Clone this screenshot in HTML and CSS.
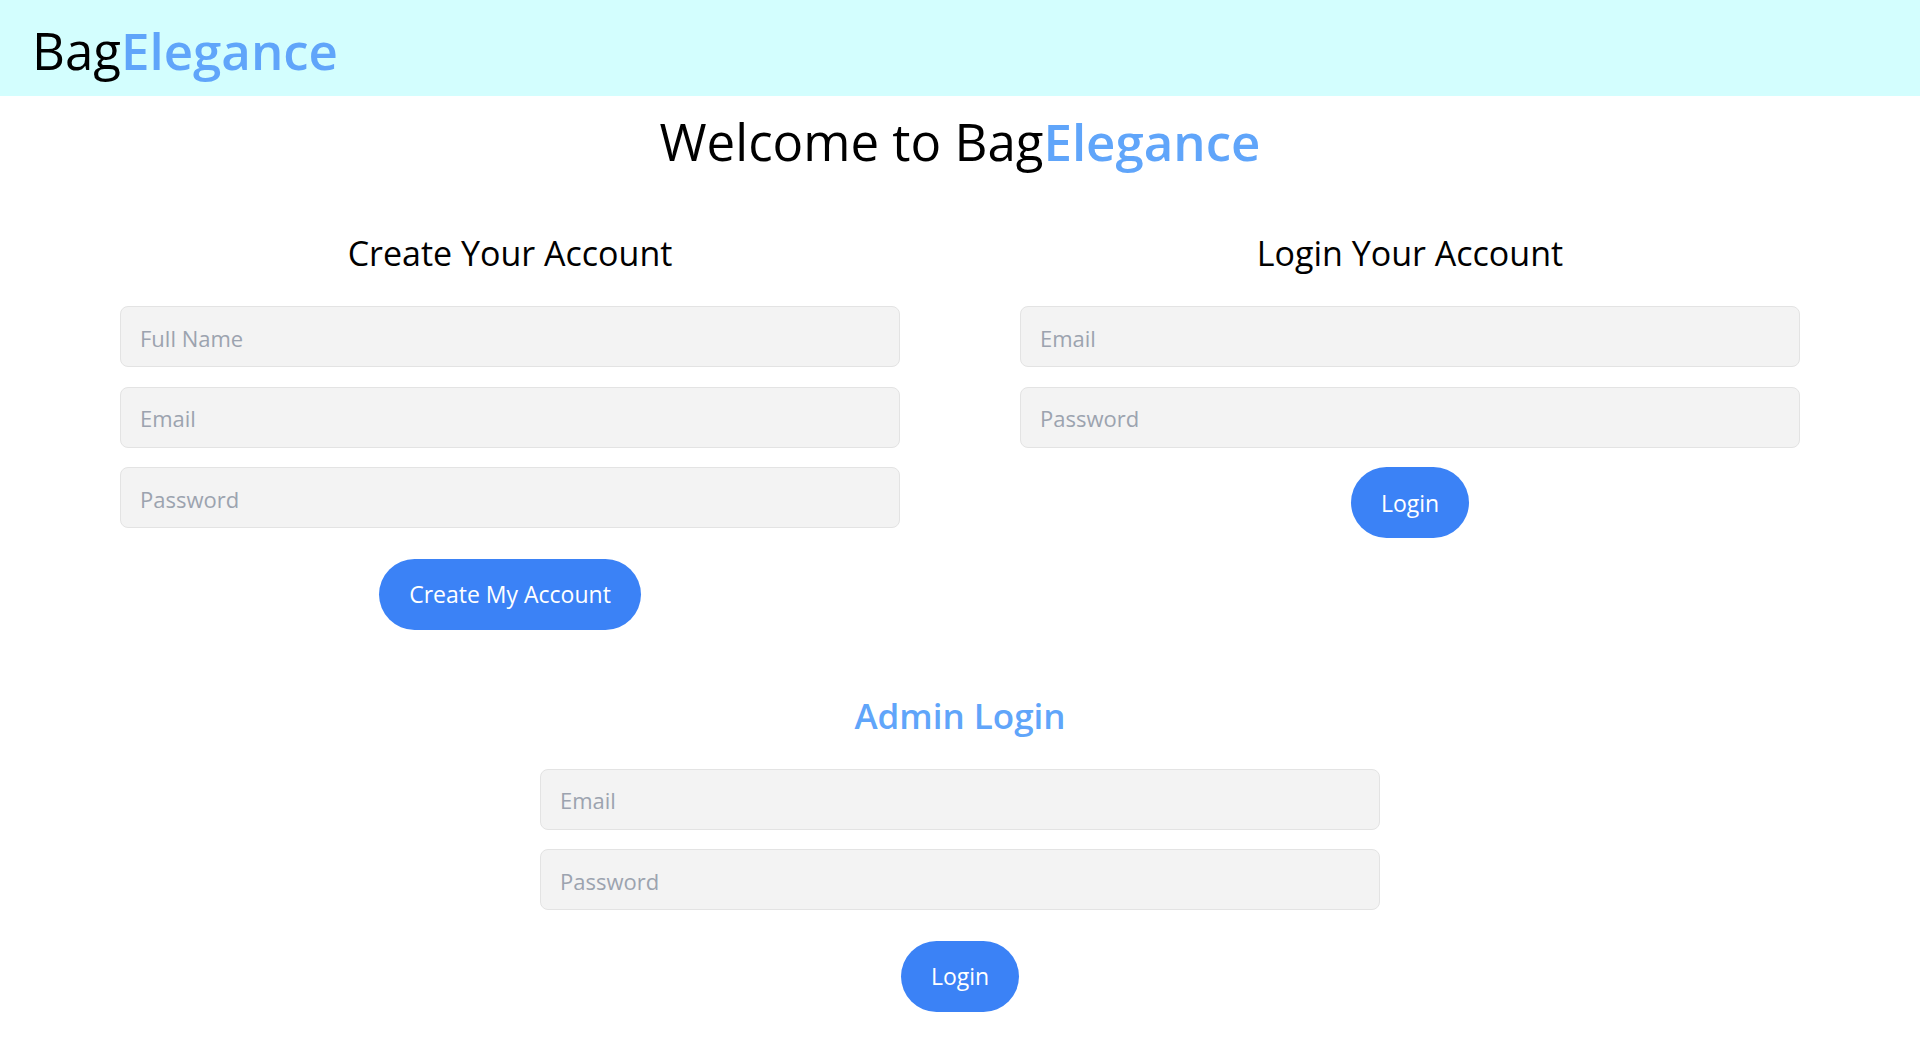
FILE: index.html
```html
<!DOCTYPE html>
<html lang="en">
<head>
<meta charset="utf-8">
<title>BagElegance</title>
<link rel="stylesheet" href="styles.css">
</head>
<body>
<header class="topbar">
  <div class="logo">Bag<span class="accent">Elegance</span></div>
</header>
<main class="page">
  <h1 class="welcome">Welcome to Bag<span class="accent">Elegance</span></h1>
  <div class="forms">
    <section class="panel">
      <h2 class="panel-title">Create Your Account</h2>
      <form class="form">
        <input class="field" type="text" placeholder="Full Name">
        <input class="field" type="email" placeholder="Email">
        <input class="field" type="password" placeholder="Password">
        <button class="btn btn-create" type="button">Create My Account</button>
      </form>
    </section>
    <section class="panel">
      <h2 class="panel-title">Login Your Account</h2>
      <form class="form">
        <input class="field" type="email" placeholder="Email">
        <input class="field" type="password" placeholder="Password">
        <button class="btn" type="button">Login</button>
      </form>
    </section>
  </div>
  <section class="admin">
    <h2 class="panel-title admin-title">Admin Login</h2>
    <form class="form">
      <input class="field" type="email" placeholder="Email">
      <input class="field" type="password" placeholder="Password">
      <button class="btn btn-admin" type="button">Login</button>
    </form>
  </section>
</main>
</body>
</html>
```
FILE: styles.css
```css
* { box-sizing: border-box; }
html, body { margin: 0; padding: 0; }
body {
  font-family: "Open Sans", "Noto Sans", sans-serif;
  color: #000;
  background: #fff;
}
.accent { color: #60a5fa; font-weight: 600; }

.topbar {
  height: 96px;
  background: #d3fefe;
  display: flex;
  align-items: center;
  padding-left: 32px;
}
.logo { font-size: 51px; line-height: 48px; padding-top: 4px; }

.page { display: flex; flex-direction: column; align-items: center; }

.welcome {
  margin: 21px 0 0;
  font-size: 51px;
  line-height: 48px;
  font-weight: 400;
  text-align: center;
}

.forms {
  width: 100%;
  display: flex;
  gap: 120px;
  padding: 0 120px;
  margin-top: 68px;
}
.panel { flex: 1; display: flex; flex-direction: column; align-items: center; }

.panel-title {
  margin: 0;
  font-size: 34px;
  line-height: 40px;
  font-weight: 400;
  text-align: center;
}

.form {
  width: 100%;
  margin-top: 33px;
  display: flex;
  flex-direction: column;
  align-items: center;
  gap: 19.5px;
}
.field {
  width: 100%;
  height: 61px;
  border: 1px solid #e3e3e3;
  border-radius: 8px;
  background: #f3f3f3;
  padding: 2px 19px 0;
  font-family: inherit;
  font-size: 22px;
  color: #111;
  outline: none;
}
.field::placeholder { color: #9ca3af; }

.btn {
  height: 71px;
  padding: 0 30px;
  border: none;
  border-radius: 9999px;
  background: #3b82f6;
  color: #fff;
  font-family: inherit;
  font-size: 23px;
  cursor: pointer;
}
.btn-create { margin-top: 11px; }

.admin { width: 840px; margin-top: 66px; display: flex; flex-direction: column; align-items: center; }
.admin-title { color: #60a5fa; font-weight: 600; font-size: 35px; }
.btn-admin { margin-top: 11px; }
```
